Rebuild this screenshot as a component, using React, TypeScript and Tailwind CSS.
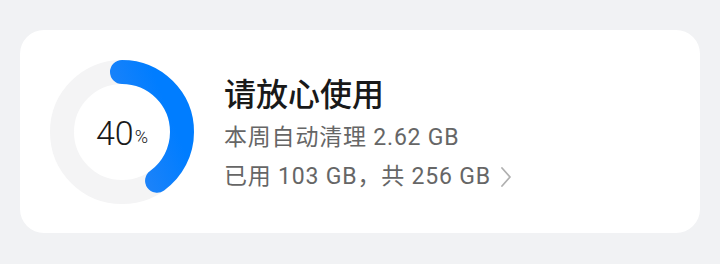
import React from 'react';

const font = { fontFamily: 'Roboto, "Noto Sans CJK SC", "Noto Sans", sans-serif' };

function UsageRing({ percent }: { percent: number }) {
  const r = 60;
  const c = 2 * Math.PI * r;
  const dash = (percent / 100) * c;

  return (
    <div className="relative w-[146px] h-[146px] shrink-0">
      <svg width="146" height="146" viewBox="0 0 146 146">
        <defs>
          <linearGradient id="ringGrad" x1="0" y1="0" x2="0.4" y2="1">
            <stop offset="0%" stopColor="#4b8cf0" />
            <stop offset="100%" stopColor="#007dff" />
          </linearGradient>
        </defs>
        <circle cx="73" cy="73" r={r} fill="none" stroke="#f4f4f5" strokeWidth="24" />
        <circle
          cx="73"
          cy="73"
          r={r}
          fill="none"
          stroke="url(#ringGrad)"
          strokeWidth="24"
          strokeLinecap="round"
          strokeDasharray={`${dash} ${c}`}
          transform="rotate(-90 73 73)"
        />
      </svg>
      <div className="absolute inset-0 flex items-center justify-center text-[#1a1a1a] pt-[2px]">
        <span className="text-[34px] leading-none font-light">{percent}</span>
        <span className="text-[18px] leading-none mt-[9px] ml-[1px] font-light">%</span>
      </div>
    </div>
  );
}

export default function App() {
  return (
    <div className="w-[720px] h-[264px] bg-[#f1f2f4] pt-[30px] px-[20px]" style={font}>
      <div className="h-[203px] bg-white rounded-[24px] flex items-center pl-[29px]">
        <UsageRing percent={40} />
        <div className="ml-[29px] flex flex-col mt-[4px]">
          <div className="text-[32px] leading-[40px] font-medium text-[#191919]">请放心使用</div>
          <div className="mt-[8px] text-[23px] leading-[30px] tracking-[0.8px] text-[#666666]">
            本周自动清理 2.62 GB
          </div>
          <div className="mt-[9px] flex items-center text-[23px] leading-[30px] tracking-[0.8px] text-[#666666]">
            <span>已用 103 GB，共 256 GB</span>
            <svg className="ml-[9px]" width="12" height="24" viewBox="0 0 12 24" fill="none">
              <path d="M2 3l8 9-8 9" stroke="#b0b0b0" strokeWidth="1.8" strokeLinecap="round" strokeLinejoin="round" />
            </svg>
          </div>
        </div>
      </div>
    </div>
  );
}
